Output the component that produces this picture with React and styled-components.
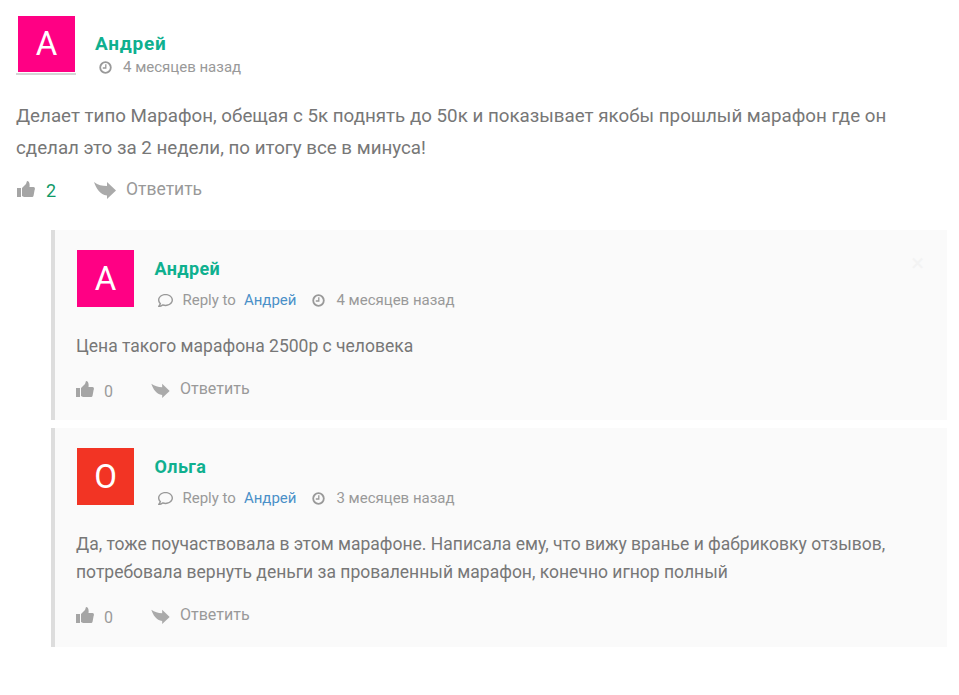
import React from 'react';
import styled, { createGlobalStyle } from 'styled-components';
import { FaRegComment } from 'react-icons/fa';

const GlobalStyle = createGlobalStyle`
  html, body {
    margin: 0;
    padding: 0;
    background: #fff;
  }
  body {
    font-family: Roboto, "Liberation Sans", sans-serif;
    color: #777;
  }
`;

const Page = styled.div`
  width: 959px;
  height: 695px;
  box-sizing: border-box;
  padding: 16px 12px 0 16px;
  overflow: hidden;
`;

const Head = styled.div`
  display: flex;
  align-items: flex-start;
`;

const AvatarFrame = styled.div`
  width: 60px;
  height: 59px;
  box-sizing: border-box;
  padding: 0 1px 0 2px;
  border-bottom: 2px solid #d5d5d5;
`;

const Avatar = styled.div`
  width: 57px;
  height: ${({ $nested }) => ($nested ? '57px' : '56px')};
  background: ${({ $color }) => $color};
  color: #fff;
  font-size: 33px;
  line-height: ${({ $nested }) => ($nested ? '57px' : '56px')};
  text-align: center;
`;

const Meta = styled.div`
  margin-left: ${({ $nested }) => ($nested ? '20.5px' : '19px')};
  padding-top: ${({ $nested }) => ($nested ? '8px' : '17px')};
`;

const Name = styled.div`
  color: #0fb08f;
  font-size: ${({ $nested }) => ($nested ? '18px' : '19px')};
  font-weight: 700;
  line-height: 21px;
  letter-spacing: ${({ $nested }) => ($nested ? '0.4px' : '0.8px')};
`;

const Info = styled.div`
  display: flex;
  align-items: center;
  margin-top: ${({ $nested }) => ($nested ? '11px' : '3px')};
  margin-left: ${({ $nested }) => ($nested ? '3px' : '4px')};
  font-size: 15px;
  line-height: 20px;
  color: #999;
`;

const InfoIcon = styled.span`
  display: inline-flex;
  align-items: center;
  margin-right: ${({ $gap }) => $gap || 12}px;
  color: #999;
  font-size: ${({ $size }) => $size || 12}px;
`;

const ClockIcon = styled.svg`
  width: 13px;
  height: 13px;
  fill: none;
  stroke: #999;
`;

const ParentLink = styled.span`
  color: #4a90c8;
  margin-left: 8px;
  margin-right: 16px;
`;

const Body = styled.p`
  margin: ${({ $nested }) => ($nested ? '22px 0 0 -1px' : '23px 0 0')};
  font-size: ${({ $nested }) => ($nested ? '17.5px' : '18.75px')};
  line-height: ${({ $nested }) => ($nested ? '28px' : '32px')};
  color: #777;
`;

const Actions = styled.div`
  display: flex;
  align-items: center;
  height: 24px;
  margin-top: ${({ $nested }) => ($nested ? '18px' : '14px')};
  margin-left: ${({ $nested }) => ($nested ? '-1px' : '1px')};
  color: #9a9a9a;
`;

const Count = styled.span`
  width: 47px;
  margin-top: ${({ $nested }) => ($nested ? '3px' : '1px')};
  margin-left: ${({ $nested }) => ($nested ? '10px' : '11px')};
  margin-right: ${({ $nested }) => ($nested ? '0' : '1px')};
  font-size: ${({ $nested }) => ($nested ? '16px' : '18px')};
  color: ${({ $active }) => ($active ? '#109a68' : '#9a9a9a')};
`;

const ThumbIcon = styled.svg`
  width: 18px;
  height: 16px;
  margin-bottom: 2px;
  fill: #a5a5a5;
`;

const ReplyIcon = styled.svg`
  width: ${({ $nested }) => ($nested ? '19px' : '22px')};
  height: ${({ $nested }) => ($nested ? '15px' : '18px')};
  margin-right: 10px;
  fill: #aaa;
`;

const ReplyLabel = styled.span`
  margin-bottom: 3px;
  font-size: ${({ $nested }) => ($nested ? '16px' : '17.5px')};
  color: #999;
`;

const Replies = styled.div`
  margin-top: 28px;
  margin-left: 35px;
  display: flex;
  flex-direction: column;
  gap: 8px;
`;

const Reply = styled.div`
  position: relative;
  box-sizing: border-box;
  height: ${({ $height }) => $height}px;
  padding: 20px 20px 0 22px;
  background: #fafafa;
  border-left: 4px solid #ddd;
`;

const Close = styled.span`
  position: absolute;
  top: 21px;
  right: 23px;
  font-size: 24px;
  line-height: 24px;
  color: #f3f3f3;
`;

const Thumb = () => (
  <ThumbIcon viewBox="0 0 18 16">
    <rect x="0" y="7" width="4" height="9" />
    <path d="M5 7 L9 3 L10 0 C12 0 13 2 12.5 6 L16.5 6 C18 6 18.2 8 17.6 9 L16.5 15 C16.3 16 15 16 14 16 L7 16 L5 15 Z" />
  </ThumbIcon>
);

const Arrow = ({ nested }) => (
  <ReplyIcon $nested={nested} viewBox="0 0 22 18">
    <path d="M0 1 C4 4 8 5 13 5 L13 1 L22 9.5 L13 18 L13 14.5 C6 14 2 7 0 1 Z" />
  </ReplyIcon>
);

const Clock = () => (
  <ClockIcon viewBox="0 0 13 13">
    <circle cx="6.5" cy="6.5" r="5.3" strokeWidth="1.8" />
    <path d="M6.8 3.2 V7 H3.8" strokeWidth="1.3" />
  </ClockIcon>
);

const replies = [
  {
    initial: 'А',
    color: '#ff0084',
    name: 'Андрей',
    date: '4 месяцев назад',
    height: 190,
    close: true,
    text: ['Цена такого марафона 2500р с человека'],
  },
  {
    initial: 'О',
    color: '#f23424',
    name: 'Ольга',
    date: '3 месяцев назад',
    height: 219,
    text: [
      'Да, тоже поучаствовала в этом марафоне. Написала ему, что вижу вранье и фабриковку отзывов,',
      'потребовала вернуть деньги за проваленный марафон, конечно игнор полный',
    ],
  },
];

const App = () => (
  <Page>
    <GlobalStyle />
    <Head>
      <AvatarFrame>
        <Avatar $color="#ff0084">А</Avatar>
      </AvatarFrame>
      <Meta>
        <Name>Андрей</Name>
        <Info>
          <InfoIcon $gap={11}><Clock /></InfoIcon>
          4 месяцев назад
        </Info>
      </Meta>
    </Head>
    <Body>
      Делает типо Марафон, обещая с 5к поднять до 50к и показывает якобы прошлый марафон где он
      <br />
      сделал это за 2 недели, по итогу все в минуса!
    </Body>
    <Actions>
      <Thumb />
      <Count $active>2</Count>
      <Arrow />
      <ReplyLabel>Ответить</ReplyLabel>
    </Actions>
    <Replies>
      {replies.map(reply => (
        <Reply key={reply.name} $height={reply.height}>
          {reply.close && <Close>×</Close>}
          <Head>
            <Avatar $nested $color={reply.color}>{reply.initial}</Avatar>
            <Meta $nested>
              <Name $nested>{reply.name}</Name>
              <Info $nested>
                <InfoIcon $size={15} $gap={10}><FaRegComment /></InfoIcon>
                Reply to
                <ParentLink>Андрей</ParentLink>
                <InfoIcon $gap={11}><Clock /></InfoIcon>
                {reply.date}
              </Info>
            </Meta>
          </Head>
          <Body $nested>
            {reply.text.map(line => (
              <React.Fragment key={line}>
                {line}
                <br />
              </React.Fragment>
            ))}
          </Body>
          <Actions $nested>
            <Thumb />
            <Count $nested>0</Count>
            <Arrow nested />
            <ReplyLabel $nested>Ответить</ReplyLabel>
          </Actions>
        </Reply>
      ))}
    </Replies>
  </Page>
);

export default App;
